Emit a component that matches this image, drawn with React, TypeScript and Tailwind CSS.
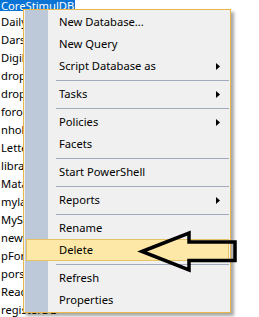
import React from "react";

const listItems = [
  "DailyNews",
  "Darslearn",
  "DigikalaDB",
  "dropship",
  "dropzone",
  "forood",
  "nholding",
  "LetterDB",
  "libraryDB",
  "MatanDB",
  "mylabDB",
  "MySLDB",
  "newsDB",
  "pForumDB",
  "porsline",
  "ReactDB",
  "registerDB",
];

type Entry = { label?: string; sub?: boolean; sep?: boolean; hot?: boolean };

const menu: Entry[] = [
  { label: "New Database..." },
  { label: "New Query" },
  { label: "Script Database as", sub: true },
  { sep: true },
  { label: "Tasks", sub: true },
  { sep: true },
  { label: "Policies", sub: true },
  { label: "Facets" },
  { sep: true },
  { label: "Start PowerShell" },
  { sep: true },
  { label: "Reports", sub: true },
  { sep: true },
  { label: "Rename" },
  { label: "Delete", hot: true },
  { sep: true },
  { label: "Refresh" },
  { label: "Properties" },
];

function SubArrow() {
  return (
    <svg width="4" height="7" viewBox="0 0 4 7" className="block">
      <polygon points="0,0 4,3.5 0,7" fill="#000" />
    </svg>
  );
}

export default function App() {
  return (
    <div className="relative w-[259px] h-[317px] overflow-hidden bg-white text-black text-[11.2px] font-['Segoe_UI','Noto_Sans',sans-serif]">
      <div className="flex flex-col">
        <div className="h-[13px] flex items-start">
          <span className="h-[11px] min-w-[73px] leading-[11px] bg-[#0a74d6] text-white pl-[1px] pr-[1px] whitespace-nowrap">
            CoreStimulDB
          </span>
        </div>
        {listItems.map((t, i) => (
          <div key={i} className="h-[18px] leading-[18px] whitespace-nowrap pl-[1px]">
            {t}
          </div>
        ))}
      </div>

      <div className="absolute left-[23px] top-[9px] w-[208px] border border-[#e9b649] p-[1px] bg-[linear-gradient(to_right,#f0f0f0_1px,#bdc9d9_1px,#bdc9d9_24px,#f0f0f0_24px)] shadow-[3px_3px_3px_rgba(0,0,0,0.35)] flex flex-col">
        {menu.map((m, i) =>
          m.sep ? (
            <div key={i} className="h-[6px] flex items-center pl-[31px]">
              <div className="h-px flex-1 bg-[#a0abbd]" />
            </div>
          ) : m.hot ? (
            <div
              key={i}
              className="h-[22px] ml-[1px] flex items-center pl-[32px] pr-[9px] bg-[#fde8a7] border border-[#e5c365]"
            >
              <span className="flex-1">{m.label}</span>
            </div>
          ) : (
            <div key={i} className="h-[22px] flex items-center pl-[34px] pr-[9px]">
              <span className="flex-1 whitespace-nowrap">{m.label}</span>
              {m.sub && <SubArrow />}
            </div>
          )
        )}
      </div>

      <svg
        className="absolute left-0 top-0 pointer-events-none"
        width="259"
        height="317"
        viewBox="0 0 259 317"
      >
        <polygon
          points="142,251.5 189,233 189,242 235,242 235,260.5 189,260.5 189,270"
          fill="none"
          stroke="#000"
          strokeWidth="3.5"
          strokeLinejoin="miter"
        />
      </svg>
    </div>
  );
}
